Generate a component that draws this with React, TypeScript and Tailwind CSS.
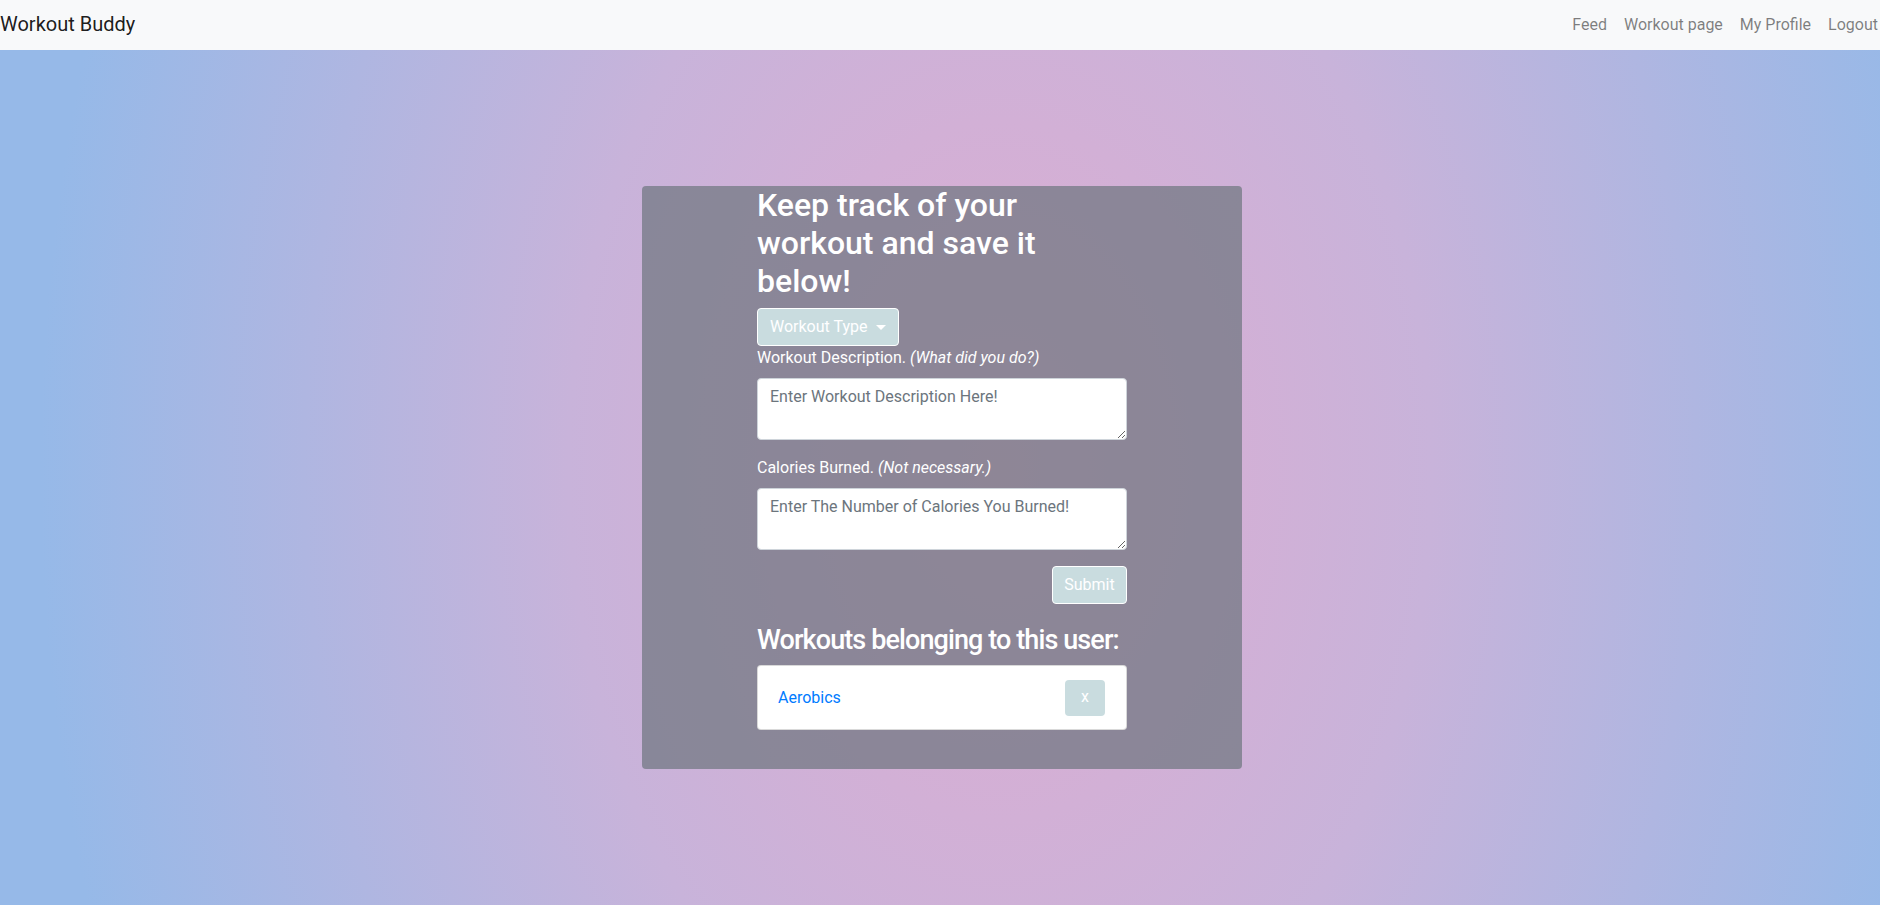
import { useState } from "react";

const font = "font-['Roboto','Liberation_Sans',sans-serif]";

const Navbar = () => {
    return (
        <nav className="h-[50px] bg-[#f8f9fa] flex items-center justify-between">
            <a className="text-[20px] leading-[30px] text-black/90 pl-0 pb-[2px]">Workout Buddy</a>
            <div className="flex items-center gap-[17px] pr-[2px] text-[16px] text-black/50">
                <a>Feed</a>
                <a>Workout page</a>
                <a>My Profile</a>
                <a>Logout</a>
            </div>
        </nav>
    )
}

const WorkoutForm = () => {
    const [description, setDescription] = useState("")
    const [calories, setCalories] = useState("")

    return (
        <div className="flex flex-col">
            <h2 className="text-[32px] leading-[38px] font-medium text-white mb-2">
                Keep track of your workout and save it below!
            </h2>

            <div>
                <button className="h-[38px] px-3 bg-[#c9dcdf] border border-white rounded text-white text-[16px] flex items-center gap-[9px]">
                    Workout Type
                    <span className="inline-block w-0 h-0 border-t-[5px] border-t-white border-x-[5px] border-x-transparent"></span>
                </button>
            </div>

            <label className="text-white text-[16px] leading-6 mt-0 mb-2">
                Workout Description. <i>(What did you do?)</i>
            </label>
            <textarea
                rows={2}
                value={description}
                onChange={(e) => setDescription(e.target.value)}
                placeholder="Enter Workout Description Here!"
                className="h-[62px] bg-white border border-[#ced4da] rounded px-3 py-[6px] text-[16px] leading-6 text-[#495057] placeholder:text-[#6c757d] mb-4"
            />

            <label className="text-white text-[16px] leading-6 mb-2">
                Calories Burned. <i>(Not necessary.)</i>
            </label>
            <textarea
                rows={2}
                value={calories}
                onChange={(e) => setCalories(e.target.value)}
                placeholder="Enter The Number of Calories You Burned!"
                className="h-[62px] bg-white border border-[#ced4da] rounded px-3 py-[6px] text-[16px] leading-6 text-[#495057] placeholder:text-[#6c757d] mb-4"
            />

            <div className="flex justify-end">
                <button className="h-[38px] w-[75px] bg-[#c9dcdf] border border-white rounded text-white text-[16px]">
                    Submit
                </button>
            </div>
        </div>
    )
}

const WorkoutList = () => {
    const workouts = ["Aerobics"]

    return (
        <div className="mt-5">
            <h3 className="text-[27px] leading-[33px] font-medium text-white mb-2 whitespace-nowrap tracking-[-0.9px]">Workouts belonging to this user:</h3>
            {workouts.map((w) => (
                <div key={w} className="h-[65px] bg-white border border-black/15 rounded flex items-center justify-between pl-5 pr-[21px]">
                    <a className="text-[#007bff] text-[16px]">{w}</a>
                    <button className="w-[40px] h-[36px] bg-[#c9dcdf] rounded text-white text-[16px] pb-[2px]">x</button>
                </div>
            ))}
        </div>
    )
}

export default function App() {
    return (
        <div className={`${font} min-h-screen flex flex-col`}>
            <Navbar/>
            <main className="flex-1 flex items-center justify-center bg-[radial-gradient(ellipse_960px_1400px_at_1000px_420px,#ddadd1_0%,#d2b0d6_25%,#c8b3da_45%,#96b9e8_100%)]">
                <div className="w-[600px] ml-[4px] bg-[#6c757d]/70 rounded px-[115px] pb-[39px]">
                    <WorkoutForm/>
                    <WorkoutList/>
                </div>
            </main>
        </div>
    )
}
